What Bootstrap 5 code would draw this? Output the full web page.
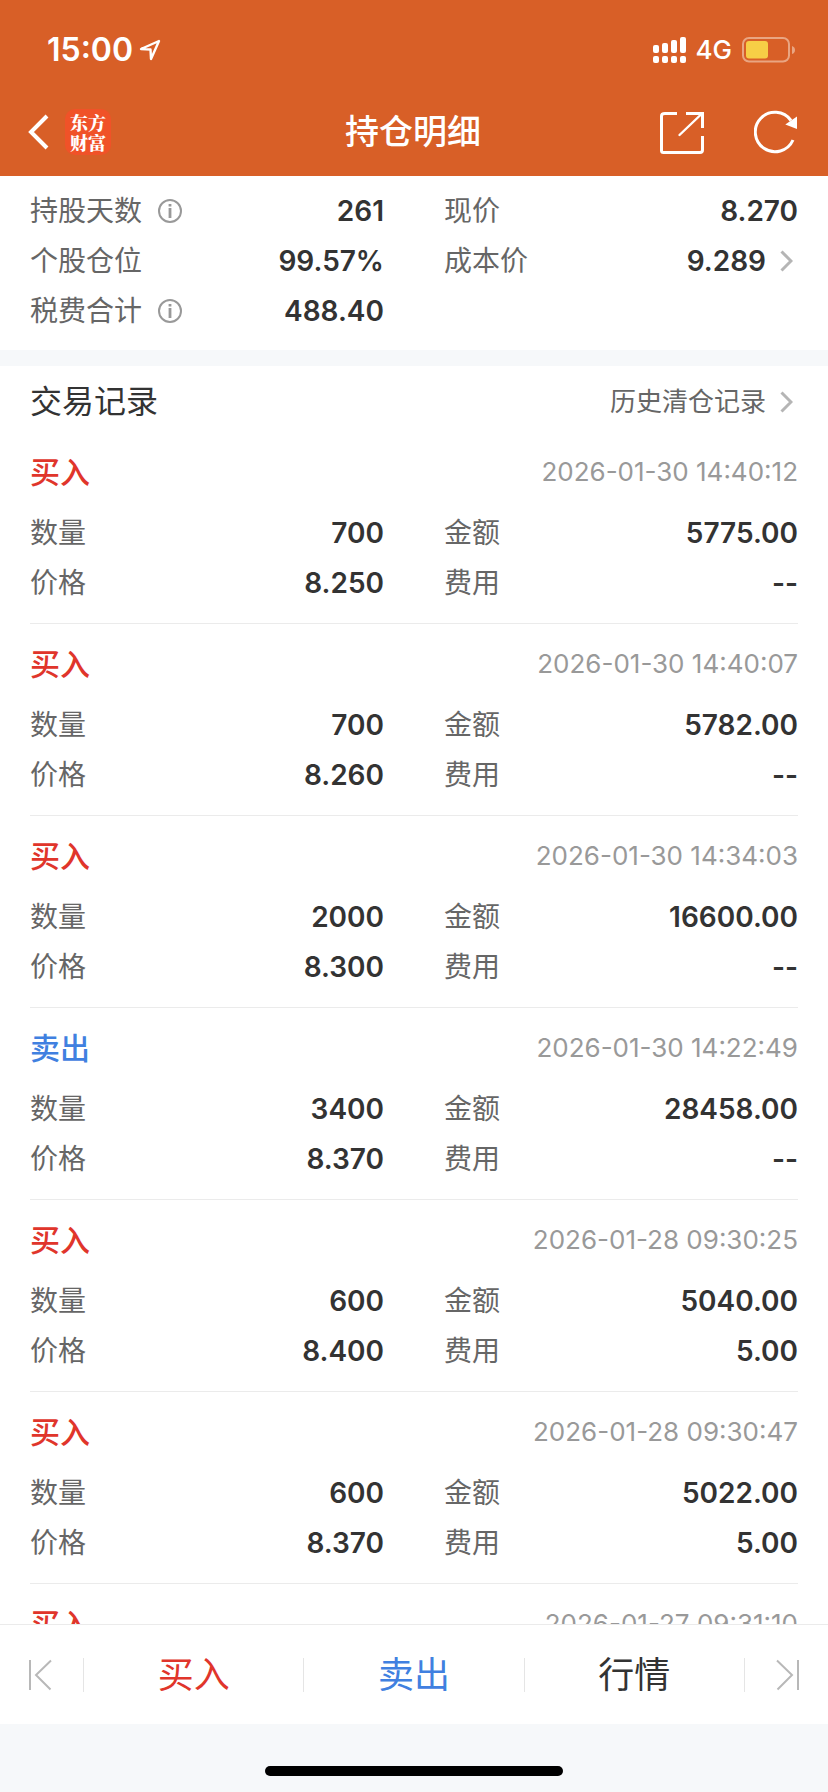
<!DOCTYPE html>
<html lang="zh-CN">
<head>
<meta charset="utf-8">
<meta name="viewport" content="width=device-width, initial-scale=1">
<title>持仓明细</title>
<link href="https://cdn.jsdelivr.net/npm/bootstrap@5.3.0/dist/css/bootstrap.min.css" rel="stylesheet">
<style>
  :root {
    --brand: #d85f27;
    --ink: #333;
    --label: #666;
    --muted: #999;
    --rule: #ebebeb;
    --band: #f6f8fa;
    --buy: #e0352b;
    --sell: #4080e0;
  }
  body { font-family: Inter, "Noto Sans CJK SC", sans-serif; font-size: 28px; line-height: 50px; color: var(--ink); background: #fff; }
  svg { display: block; flex: none; fill: none; }
  .gutter { padding-left: 30px; padding-right: 30px; }

  .app-head { background: var(--brand); }
  .status { height: 88px; padding: 12px 32px 0 47px; }
  .clock { font-size: 32px; font-weight: 600; }
  .clock-row { gap: 6px; }
  .signal-row { gap: 10px; }
  .net { font-size: 26px; font-weight: 500; }
  .titlebar { display: grid; grid-template-columns: 1fr auto 1fr; height: 88px; padding: 0 30px 0 28px; }
  .titlebar h1 { font-size: 34px; line-height: 50px; font-weight: 500; }
  .back { gap: 16px; }
  .logo { width: 46px; height: 46px; border-radius: 10px; background: #f05228; font-family: "Noto Serif CJK SC", "Noto Sans CJK SC", serif; font-size: 18px; line-height: 20px; font-weight: 900; }
  .tools { gap: 50px; }

  .pairs { display: grid; grid-template-columns: 1fr 1fr; column-gap: 60px; }
  .pairs dt { font-weight: 400; color: var(--label); }
  .pairs dd { font-weight: 600; }
  .summary { padding-top: 10px; padding-bottom: 14px; border-bottom: 16px solid var(--band); }
  .more { gap: 14px; padding-right: 5px; }

  .records-head { padding-top: 6px; height: 66px; }
  .records-head h2 { font-size: 32px; line-height: 50px; font-weight: 400; }
  .records-head a { font-size: 26px; color: var(--label); }
  .record { padding: 10px 0 15px; border-bottom: 1px solid var(--rule); }
  .record header { height: 60px; margin-bottom: 6px; }
  .record h3 { font-size: 30px; line-height: 50px; font-weight: 500; }
  .record time { font-size: 26px; color: var(--muted); }
  .buy { color: var(--buy); }
  .sell { color: var(--sell); }

  .trade-bar { border-top: 1px solid var(--rule); height: 100px; }
  .trade-bar .btn { font-size: 36px; line-height: 50px; border-radius: 0; border: 0; }
  .trade-bar .action { flex: 1 1 0; }
  .trade-bar .quote { color: var(--ink); }
  .trade-bar .step { flex: 0 0 83px; }
  .trade-bar .vr { width: 1px; height: 34px; min-height: 0; align-self: center; background: #e5e5e5; opacity: 1; }
  .home { background: var(--band); height: 68px; padding-bottom: 16px; }
  .home span { width: 36%; height: 10px; border-radius: 5px; background: #000; }
</style>
</head>
<body>
<div class="d-flex flex-column vh-100 overflow-hidden">

  <header class="app-head text-white flex-shrink-0">
    <div class="status d-flex align-items-center justify-content-between">
      <div class="clock-row d-flex align-items-center">
        <span class="clock">15:00</span>
        <svg width="22" height="22" viewBox="0 0 22 22" stroke="#fff" stroke-width="2.4" stroke-linejoin="round"><path d="M20 2 2 10l9.500.5L12 20Z"/></svg>
      </div>
      <div class="signal-row d-flex align-items-center">
        <svg width="33" height="28" viewBox="0 0 33 28"><g fill="#fff"><rect y="9" width="6" height="8" rx="2"/><rect x="9" y="7" width="6" height="10" rx="2"/><rect x="18" y="4" width="6" height="13" rx="2"/><rect x="27" y="1" width="6" height="16" rx="2"/><rect y="20" width="6" height="7" rx="2"/><rect x="9" y="20" width="6" height="7" rx="2"/><rect x="18" y="20" width="6" height="7" rx="2"/><rect x="27" y="20" width="6" height="7" rx="2"/></g></svg>
        <span class="net">4G</span>
        <svg width="54" height="26" viewBox="0 0 54 26"><rect x="1" y="1" width="46" height="23.500" rx="6" stroke="#e9a582" stroke-width="2"/><rect x="4" y="4" width="22" height="17.500" rx="3" fill="#f7ce46"/><path d="M50 9q3 1 3 4t-3 4Z" fill="#e9a582"/></svg>
      </div>
    </div>
    <nav class="titlebar align-items-center">
      <a href="#" class="back d-flex align-items-center text-white text-decoration-none" aria-label="返回">
        <svg width="21" height="36" viewBox="0 0 21 36" stroke="#fff" stroke-width="4"><path d="M19 2 3 18l16 16"/></svg>
        <span class="logo d-flex flex-column align-items-center justify-content-center"><span>东方</span><span>财富</span></span>
      </a>
      <h1 class="m-0">持仓明细</h1>
      <div class="tools d-flex justify-content-end">
        <button type="button" class="btn p-0 border-0" aria-label="分享"><svg width="44" height="44" viewBox="0 0 44 44" stroke="#fff" stroke-width="3"><path d="M17 3.500H5Q1.500 3.500 1.500 6v34.500q0 2 2 2H40q2.500 0 2.500-2.500V26M26 3.500h16.500V18"/><path d="M19.500 25 41 4.500" stroke-width="2.400" stroke-linecap="round"/></svg></button>
        <button type="button" class="btn p-0 border-0" aria-label="刷新"><svg width="44" height="44" viewBox="0 0 44 44" stroke="#fff" stroke-width="3"><path d="M39 30A19.700 19.700 0 1 1 37 10.500"/><path d="M43 6.500V19l-11.700-4.400Z" fill="#fff" stroke="none"/></svg></button>
      </div>
    </nav>
  </header>

  <main class="flex-grow-1 overflow-hidden" style="min-height:0">
    <section class="summary gutter" aria-label="持仓概况">
      <dl class="pairs m-0">
        <div class="d-flex justify-content-between"><dt class="d-flex align-items-center">持股天数<svg class="ms-3" width="24" height="24" viewBox="0 0 24 24" stroke="#999" stroke-width="2"><circle cx="12" cy="12" r="11"/><path d="M12 9V19M12 5v2.500" stroke-width="2.800"/></svg></dt><dd class="m-0">261</dd></div>
        <div class="d-flex justify-content-between"><dt>现价</dt><dd class="m-0">8.270</dd></div>
        <div class="d-flex justify-content-between"><dt>个股仓位</dt><dd class="m-0">99.57%</dd></div>
        <div class="d-flex justify-content-between"><dt>成本价</dt><dd class="m-0"><a href="#" class="more d-flex align-items-center text-reset text-decoration-none">9.289<svg width="13" height="22" viewBox="0 0 13 22" stroke="#b5b5b5" stroke-width="3"><path d="m1.500 1.500 9.500 9.500-9.500 9.500"/></svg></a></dd></div>
        <div class="d-flex justify-content-between"><dt class="d-flex align-items-center">税费合计<svg class="ms-3" width="24" height="24" viewBox="0 0 24 24" stroke="#999" stroke-width="2"><circle cx="12" cy="12" r="11"/><path d="M12 9V19M12 5v2.500" stroke-width="2.800"/></svg></dt><dd class="m-0">488.40</dd></div>
      </dl>
    </section>

    <section class="gutter">
      <div class="records-head d-flex justify-content-between align-items-center">
        <h2 class="m-0">交易记录</h2>
        <a href="#" class="more d-flex align-items-center text-decoration-none">历史清仓记录<svg width="13" height="22" viewBox="0 0 13 22" stroke="#b5b5b5" stroke-width="3"><path d="m1.500 1.500 9.500 9.500-9.500 9.500"/></svg></a>
      </div>
      <div id="records"></div>
    </section>
  </main>

  <footer class="flex-shrink-0">
    <div class="trade-bar d-flex align-items-center">
      <button type="button" class="btn step py-0 ps-0 pe-1 d-flex justify-content-center" aria-label="上一只"><svg width="24" height="32" viewBox="0 0 24 32" stroke="#b8b8b8" stroke-width="2"><path d="M2 1v30"/><path d="M23 1.500 8 16l14.500 14.500"/></svg></button>
      <div class="vr"></div>
      <button type="button" class="btn action buy p-0">买入</button>
      <div class="vr"></div>
      <button type="button" class="btn action sell p-0">卖出</button>
      <div class="vr"></div>
      <button type="button" class="btn action quote p-0">行情</button>
      <div class="vr"></div>
      <button type="button" class="btn step py-0 pe-0 ps-1 d-flex justify-content-center" aria-label="下一只"><svg width="24" height="32" viewBox="0 0 24 32" stroke="#b8b8b8" stroke-width="2"><path d="M22 1v30"/><path d="M1 1.500 16 16 1.500 30.500"/></svg></button>
    </div>
    <div class="home d-flex justify-content-center align-items-end"><span></span></div>
  </footer>
</div>

<script src="https://cdn.jsdelivr.net/npm/bootstrap@5.3.0/dist/js/bootstrap.bundle.min.js"></script>
<script>
  const records = [
    ['buy', '2026-01-30 14:40:12', '700', '5775.00', '8.250', '--'],
    ['buy', '2026-01-30 14:40:07', '700', '5782.00', '8.260', '--'],
    ['buy', '2026-01-30 14:34:03', '2000', '16600.00', '8.300', '--'],
    ['sell', '2026-01-30 14:22:49', '3400', '28458.00', '8.370', '--'],
    ['buy', '2026-01-28 09:30:25', '600', '5040.00', '8.400', '5.00'],
    ['buy', '2026-01-28 09:30:47', '600', '5022.00', '8.370', '5.00'],
    ['buy', '2026-01-27 09:31:10', '', '', '', '']
  ];
  const pair = (label, value) => `<div class="d-flex justify-content-between"><dt>${label}</dt><dd class="m-0">${value}</dd></div>`;
  document.getElementById('records').innerHTML = records.map(([side, time, qty, amount, price, fee]) => `
    <article class="record">
      <header class="d-flex justify-content-between align-items-center">
        <h3 class="m-0 ${side}">${side === 'buy' ? '买入' : '卖出'}</h3>
        <time>${time}</time>
      </header>
      ${qty && `<dl class="pairs m-0">${pair('数量', qty)}${pair('金额', amount)}${pair('价格', price)}${pair('费用', fee)}</dl>`}
    </article>`).join('');
</script>
</body>
</html>
